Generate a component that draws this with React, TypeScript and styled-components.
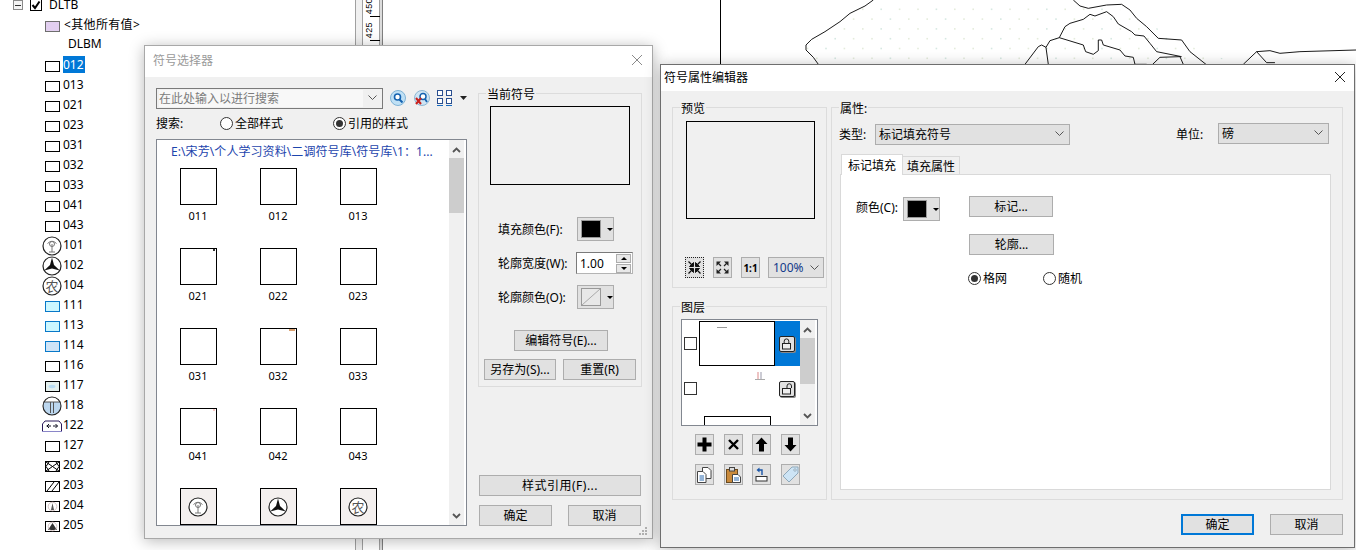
import React from "react";
import styled, { createGlobalStyle } from "styled-components";

const Global = createGlobalStyle`
  html, body { margin: 0; padding: 0; background: #fff; }
  body { font-family: "Noto Sans", "Noto Sans CJK SC", sans-serif; font-size: 12px; color: #000; }
  * { box-sizing: border-box; }
`;

const Desktop = styled.div`
  position: relative; width: 1356px; height: 550px; overflow: hidden; background: #fff;
`;

/* ---------- tree ---------- */
const Tree = styled.div`
  width: 144px; margin-top: -5px; display: flex; flex-direction: column;
`;
const TreeRow = styled.div`
  height: 20px; display: flex; align-items: center; padding-left: 42px; line-height: 16px; white-space: nowrap;
`;
const RootRow = styled(TreeRow)`
  padding-left: 13px;
`;
const Expander = styled.span`
  width: 10px; height: 10px; border: 1px solid #8a8a8a; background: #f4f4f4; display: flex; align-items: center; justify-content: center;
  &::after { content: ""; width: 6px; height: 1px; background: #333; }
`;
const TreeCheck = styled.span`
  width: 12px; height: 12px; border: 1px solid #000; margin-left: 7px; margin-right: 7px; display: flex;
`;
const IconSlot = styled.span`
  width: 20px; height: 20px; margin-top: 2px; display: flex; align-items: center; justify-content: center; flex: none;
`;
const RowText = styled.span<{ $selected?: boolean }>`
  margin: 0 0 2px 1px; padding: 0 1px 0 0; line-height: 17px; height: 17px;
  background: ${(p) => (p.$selected ? "#0078d7" : "transparent")};
  color: ${(p) => (p.$selected ? "#fff" : "#000")};
`;
const OtherText = styled.span`
  margin-left: 2px; letter-spacing: .35px;
`;
const FieldName = styled.span`
  margin: 0 0 2px 26px;
`;

/* ---------- ruler + map backdrop ---------- */
const Ruler = styled.div`
  position: absolute; left: 355px; top: 0; width: 28px; height: 550px; display: flex;
  border-left: 1px solid #a0a0a0; background: #f0f0f0;
`;
const RulerGap = styled.div`
  width: 6px;
`;
const RulerFace = styled.div`
  width: 18px; height: 100%; background: #fff; border-left: 1px solid #a0a0a0; position: relative;
  border-right: 1px solid #a0a0a0;
`;
const RulerEnd = styled.div`
  width: 3px; background: #dcdcdc; border-right: 1px solid #808080;
`;
const RulerTick = styled.span<{ $y: number }>`
  position: absolute; left: 7px; width: 10px; height: 1px; background: #000; top: ${(p) => p.$y}px;
`;
const RulerNum = styled.span<{ $y: number }>`
  position: absolute; left: 1px; top: ${(p) => p.$y}px; writing-mode: vertical-rl; transform: rotate(180deg);
  font-size: 9px; line-height: 10px; font-family: "Liberation Sans", sans-serif; letter-spacing: .4px;
`;
const MapSvg = styled.svg`
  position: absolute; left: 700px; top: 0; width: 656px; height: 70px;
`;

/* ---------- windows ---------- */
const Win = styled.section<{ $l: number; $t: number; $w: number; $h: number; $dark?: boolean }>`
  position: absolute; left: ${(p) => p.$l}px; top: ${(p) => p.$t}px; width: ${(p) => p.$w}px; height: ${(p) => p.$h}px;
  background: #f0f0f0; border: 1px solid ${(p) => (p.$dark ? "#6e6e6e" : "#a8a8a8")};
  box-shadow: 0 2px 14px rgba(0,0,0,.28); display: flex; flex-direction: column;
`;
const TitleBar = styled.header<{ $h: number; $dim?: boolean }>`
  height: ${(p) => p.$h}px; padding-bottom: 3px; background: #fff; flex: none; display: flex; align-items: center; justify-content: space-between;
  color: ${(p) => (p.$dim ? "#9a9a9a" : "#000")};
`;
const TitleText = styled.span<{ $left: number }>`
  margin-left: ${(p) => p.$left}px;
`;
const CloseIcon = styled.svg<{ $right: number }>`
  width: 12px; height: 12px; margin-right: ${(p) => p.$right}px;
`;

const Body1 = styled.div`
  flex: 1; display: flex; padding: 10px 11px 13px 11px; gap: 11px; position: relative;
`;
const LeftCol = styled.div`
  width: 311px; display: flex; flex-direction: column;
`;
const RightCol = styled.div`
  width: 164px; display: flex; flex-direction: column; padding-top: 6px;
`;
const SearchRow = styled.div`
  display: flex; align-items: center; height: 22px;
`;
const SearchCombo = styled.div`
  width: 227px; height: 21px; border: 1px solid #7a7a7a; background: #f0f0f0; display: flex; align-items: center; padding-left: 2px; flex: none;
`;
const SearchField = styled.span`
  width: 204px; min-height: 15px; background: #f8f8f8; color: #7c7c7c; line-height: 17px; white-space: nowrap;
`;
const ChevronBox = styled.span`
  flex: 1; display: flex; justify-content: center;
`;
const SearchIcon = styled.svg<{ $ml: number }>`
  margin-left: ${(p) => p.$ml}px; flex: none;
`;
const ScopeRow = styled.div`
  height: 20px; margin-top: 4px; display: flex; align-items: center;
`;
const ScopeLabel = styled.span`
  width: 64px;
`;
const RadioItem = styled.label<{ $w?: number }>`
  display: flex; align-items: center; gap: 2px; width: ${(p) => (p.$w ? `${p.$w}px` : "auto")}; white-space: nowrap;
`;
const RadioDot = styled.span<{ $on?: boolean }>`
  width: 13px; height: 13px; border-radius: 50%; border: 1px solid #333; background: #fff; display: flex; align-items: center; justify-content: center; flex: none;
  &::after { content: ""; width: 7px; height: 7px; border-radius: 50%; background: ${(p) => (p.$on ? "#333" : "transparent")}; }
`;
const SymbolList = styled.div`
  margin-top: 6px; height: 387px; border: 1px solid #828790; background: #fff; display: flex; overflow: hidden;
`;
const SymbolPane = styled.div`
  width: 292px; overflow: hidden; padding-left: 1px;
`;
const PathLine = styled.div`
  height: 28px; padding: 3px 0 0 13px; line-height: 17px; color: #1d45ad; white-space: nowrap; font-size: 12px; letter-spacing: .08px;
`;
const SymbolGrid = styled.div`
  display: grid; grid-template-columns: repeat(3, 80px); grid-auto-rows: 80px;
`;
const SymbolCell = styled.div`
  display: flex; flex-direction: column; align-items: center;
`;
const SymbolBox = styled.div<{ $tint?: boolean }>`
  width: 37px; height: 37px; border: 1px solid #000; background: ${(p) => (p.$tint ? "#f4f0ef" : "#fff")};
  position: relative; display: flex; align-items: center; justify-content: center; flex: none;
`;
const Speck = styled.span<{ $c: string; $w: number }>`
  position: absolute; top: 0; right: 1px; width: ${(p) => p.$w}px; height: 2px; background: ${(p) => p.$c};
`;
const SymbolName = styled.span`
  font-size: 11px; line-height: 14px; margin-top: 4px;
`;
const Scroll = styled.div<{ $w: number }>`
  width: ${(p) => p.$w}px; background: #f0f0f0; position: relative; flex: none; display: flex; flex-direction: column; align-items: center; justify-content: space-between;
  padding: 7px 0 6px;
`;
const Thumb = styled.div<{ $top: number; $h: number }>`
  position: absolute; left: 0; right: 0; top: ${(p) => p.$top}px; height: ${(p) => p.$h}px; background: #cdcdcd;
`;
const ListGutter = styled.div`
  flex: 1; background: #fff;
`;

const Group = styled.div<{ $h: number; $w?: number }>`
  position: relative; height: ${(p) => p.$h}px; ${(p) => (p.$w ? `width: ${p.$w}px;` : "")}
  border: 1px solid #dcdcdc; display: flex; flex-direction: column; flex: none;
`;
const Legend = styled.span`
  position: absolute; left: 7px; top: -8px; background: #f0f0f0; padding: 0 1px; line-height: 17px;
`;
const PreviewBox = styled.div<{ $w: number; $h: number; $ml: number; $mt: number }>`
  width: ${(p) => p.$w}px; height: ${(p) => p.$h}px; margin: ${(p) => p.$mt}px 0 0 ${(p) => p.$ml}px; border: 1px solid #000; flex: none;
`;
const PropRow = styled.div<{ $mt: number; $h: number }>`
  display: flex; align-items: center; height: ${(p) => p.$h}px; margin-top: ${(p) => p.$mt}px; padding-left: 19px;
`;
const PropLabel = styled.span`
  width: 79px; white-space: nowrap;
`;
const ColorBtn = styled.span`
  width: 37px; height: 24px; background: #e1e1e1; border: 1px solid #adadad; display: flex; align-items: center; padding-left: 3px; flex: none;
`;
const Swatch = styled.span`
  width: 20px; height: 18px; background: #000; border: 1px solid #9a9a9a; flex: none;
`;
const OutlineSwatch = styled.svg`
  width: 20px; height: 18px; flex: none;
`;
const Sep = styled.span`
  width: 1px; height: 18px; background: #a0a0a0; margin-left: 3px; box-shadow: 1px 0 0 #fff;
`;
const DropTri = styled.span`
  margin-left: 3px; width: 0; height: 0; border-left: 3px solid transparent; border-right: 3px solid transparent; border-top: 3px solid #000;
`;
const Spinner = styled.div`
  width: 57px; height: 22px; margin-left: -1px; background: #fff; border: 1px solid #7a7a7a; border-right-color: #b4b4b4; border-bottom-color: #b4b4b4; display: flex; align-items: center; justify-content: space-between; padding-left: 3px; padding-right: 1px;
`;
const SpinCol = styled.div`
  display: flex; flex-direction: column; gap: 1px;
`;
const SpinBtn = styled.span`
  width: 15px; height: 9px; background: #e8e8e8; border: 1px solid #adadad; display: flex; align-items: center; justify-content: center;
`;
const TriUp = styled.span`
  width: 0; height: 0; border-left: 3px solid transparent; border-right: 3px solid transparent; border-bottom: 3px solid #000;
`;
const TriDown = styled(TriUp)`
  border-bottom: 0; border-top: 3px solid #000;
`;
const Btn = styled.button<{ $w: number; $h?: number; $primary?: boolean; $wide?: boolean }>`
  width: ${(p) => p.$w}px; height: ${(p) => p.$h ?? 21}px; padding: 0; background: #e1e1e1; flex: none;
  border: ${(p) => (p.$primary ? "2px solid #0078d7" : "1px solid #adadad")};
  font: inherit; color: #000; white-space: nowrap; display: block; line-height: 17px; letter-spacing: ${(p) => (p.$wide ? ".5px" : "0")};
`;
const CenterRow = styled.div`
  display: flex; justify-content: center; margin-top: 21px; padding-left: 2px;
`;
const SplitRow = styled.div`
  display: flex; justify-content: space-between; margin: 8px 5px 0 5px;
`;
const BottomStack = styled.div`
  margin-top: auto; display: flex; flex-direction: column; gap: 9px; margin-left: 1px; margin-right: 1px;
`;
const PairRow = styled.div`
  display: flex; justify-content: space-between;
`;
const Grip = styled.svg`
  position: absolute; right: 4px; bottom: 3px;
`;

/* ---------- editor window ---------- */
const Body2 = styled.div`
  flex: 1; display: flex; flex-direction: column; padding: 16px 11px 12px 11px;
`;
const Columns = styled.div`
  display: flex; gap: 4px;
`;
const EditorLeft = styled.div`
  width: 156px; display: flex; flex-direction: column; gap: 18px;
`;
const ToolRow = styled.div<{ $mt: number; $pl: number; $gap: number }>`
  display: flex; align-items: center; margin-top: ${(p) => p.$mt}px; padding-left: ${(p) => p.$pl}px; gap: ${(p) => p.$gap}px;
`;
const ToolBtn = styled.span<{ $dotted?: boolean; $w?: number }>`
  width: ${(p) => p.$w ?? 19}px; height: 21px; background: #e1e1e1; border: 1px ${(p) => (p.$dotted ? "dotted #222" : "solid #adadad")};
  display: flex; align-items: center; justify-content: center; flex: none; font-weight: 700; font-size: 10px; line-height: 12px;
`;
const ZoomCombo = styled.span`
  width: 56px; height: 21px; margin-left: -1px; background: #e1e1e1; border: 1px solid #adadad; display: flex; align-items: center; justify-content: space-between; padding: 0 4px; color: #123a8a; flex: none;
`;
const LayerList = styled.div`
  width: 137px; height: 107px; margin: 12px 0 0 8px; border: 1px solid #828790; background: #fff; display: flex; overflow: hidden; flex: none;
`;
const LayerRows = styled.div`
  width: 118px; padding-top: 1px; display: flex; flex-direction: column; flex: none;
`;
const LayerRow = styled.div<{ $selected?: boolean }>`
  height: 45px; display: flex; align-items: center; flex: none;
  background: ${(p) => (p.$selected ? "linear-gradient(90deg, #fff 0 93px, #0078d7 93px)" : "#fff")};
`;
const LayerCheck = styled.span`
  width: 13px; height: 13px; border: 1px solid #333; background: #fff; margin-left: 2px; margin-right: 2px; flex: none;
`;
const LayerThumb = styled.span<{ $outlined?: boolean }>`
  width: 76px; height: 45px; border: 1px solid ${(p) => (p.$outlined ? "#000" : "transparent")}; position: relative; flex: none; background: #fff;
`;
const ThumbMark = styled.svg<{ $l: number; $t: number }>`
  position: absolute; left: ${(p) => p.$l}px; top: ${(p) => p.$t}px;
`;
const LockBtn = styled.span`
  width: 16px; height: 16px; margin-left: 4px; background: #e1e1e1; border: 1px solid #222; border-radius: 2px; box-shadow: 1px 1px 0 #888; display: flex; align-items: center; justify-content: center; flex: none;
`;
const LastLayer = styled.div`
  margin: 5px 0 0 22px; width: 67px; height: 30px; border: 1px solid #000; flex: none; background: #fff;
`;
const ActionRow = styled.div<{ $mt: number }>`
  display: flex; gap: 9.5px; margin-top: ${(p) => p.$mt}px; padding-left: 22px;
`;
const AttrRow = styled.div`
  display: flex; align-items: center; height: 22px; margin-top: 15px; padding-left: 7px;
`;
const AttrLabel = styled.span<{ $w: number; $ml?: number }>`
  width: ${(p) => p.$w}px; margin-left: ${(p) => p.$ml ?? 0}px; flex: none;
`;
const Combo = styled.div<{ $w: number; $up?: boolean }>`
  width: ${(p) => p.$w}px; height: 21px; background: #e1e1e1; border: 1px solid #adadad; display: flex; align-items: center; justify-content: space-between; padding: 0 5px 0 3px; flex: none;
  margin-top: ${(p) => (p.$up ? "-2px" : "0")};
`;
const Tabs = styled.div`
  display: flex; align-items: flex-end; height: 21px; margin: 9px 0 0 9px; position: relative; z-index: 1;
`;
const Tab = styled.span<{ $active?: boolean }>`
  height: ${(p) => (p.$active ? 21 : 19)}px; width: ${(p) => (p.$active ? 62 : 57)}px; flex: none; display: flex; align-items: center; justify-content: center;
  background: ${(p) => (p.$active ? "#fff" : "#f0f0f0")}; border: 1px solid #d9d9d9; border-bottom: ${(p) => (p.$active ? "0" : "1px solid #d9d9d9")};
  border-left: ${(p) => (p.$active ? "1px solid #d9d9d9" : "0")};
`;
const TabPanel = styled.div`
  margin: -1px 0 0 8px; width: 491px; height: 316px; background: #fff; border: 1px solid #d9d9d9; display: flex; padding: 21px 0 0 15px;
`;
const ColorLabel = styled.span`
  width: 47px; white-space: nowrap; line-height: 24px; flex: none;
`;
const ColorCell = styled.div`
  margin-top: 1px; margin-right: 29px; flex: none;
`;
const PanelButtons = styled.div`
  display: flex; flex-direction: column; gap: 17px;
`;
const RadioRow = styled.div`
  display: flex; align-items: center; margin-top: -4px; height: 20px; margin-left: -1px;
`;
const Footer = styled.div`
  display: flex; justify-content: flex-end; gap: 16px; margin-top: 14px; margin-right: 0;
`;

/* ---------- drawings ---------- */
const Chevron = ({ c = "#555" }: { c?: string }) => (
  <svg width="9" height="6" viewBox="0 0 9 6"><polyline points="0.5,0.5 4.5,4.5 8.5,0.5" fill="none" stroke={c} strokeWidth="1" /></svg>
);
const ChevUp = () => (
  <svg width="9" height="6" viewBox="0 0 9 6"><polyline points="1,5 4.5,1.5 8,5" fill="none" stroke="#555" strokeWidth="1.8" /></svg>
);
const ChevDown = () => (
  <svg width="9" height="6" viewBox="0 0 9 6"><polyline points="1,1 4.5,4.5 8,1" fill="none" stroke="#555" strokeWidth="1.8" /></svg>
);
const CloseX = ({ c, right }: { c: string; right: number }) => (
  <CloseIcon $right={right} viewBox="0 0 12 12"><path d="M1 1 L11 11 M11 1 L1 11" stroke={c} strokeWidth="1" fill="none" /></CloseIcon>
);

type Kind = "plain" | "cyan" | "blue" | "water" | "signal" | "star" | "nong" | "dam" | "ditch" | "hatch" | "slash" | "tower" | "mound";

const Glyph = ({ kind }: { kind: Kind }) => {
  if (kind === "signal" || kind === "star" || kind === "nong")
    return (
      <svg width="20" height="20" viewBox="0 0 20 20">
        <circle cx="10" cy="10" r="9" fill="#fff" stroke="#222" strokeWidth="1.2" />
        {kind === "signal" && (
          <g fill="none" stroke="#777" strokeWidth="1">
            <path d="M5.5 7.5 Q10 3 14.5 7.5" />
            <circle cx="10" cy="8" r="2.5" />
            <path d="M10 8 V16 M7 16 H13" />
          </g>
        )}
        {kind === "star" && <path d="M10 1.5 L12 9 L17.8 14.5 L10 12.4 L2.2 14.5 L8 9 Z" fill="#111" />}
        {kind === "nong" && (
          <text x="10" y="14.5" textAnchor="middle" fontSize="13" fill="#555" fontFamily="'Noto Sans CJK SC', sans-serif">农</text>
        )}
      </svg>
    );
  if (kind === "dam")
    return (
      <svg width="20" height="20" viewBox="0 0 20 20">
        <defs><clipPath id="damClip"><circle cx="10" cy="10" r="9" /></clipPath></defs>
        <circle cx="10" cy="10" r="9" fill="#fff" />
        <rect x="0" y="6" width="20" height="14" fill="#bcd7ef" clipPath="url(#damClip)" />
        <path d="M1.5 6 H18.5 M8.5 6 V17 M11.5 6 V17" stroke="#555" strokeWidth="1" fill="none" />
        <circle cx="10" cy="10" r="9" fill="none" stroke="#222" strokeWidth="1.1" />
      </svg>
    );
  if (kind === "ditch")
    return (
      <svg width="20" height="12" viewBox="0 0 20 12">
        <path d="M0.5 11.5 V4 L3 1 H17 L19.5 4 V11.5 Z" fill="#fff" stroke="#2a1a5a" strokeWidth="1" />
        <path d="M4.5 6 H9 M7 4 L5 6 L7 8 M11 6 H15.5 M13.5 4 L15.5 6 L13.5 8" stroke="#112" strokeWidth="1" fill="none" />
        <path d="M0 11.5 H20" stroke="#8a86c8" strokeWidth="1" />
      </svg>
    );
  const fill = kind === "cyan" ? "#ccf7ff" : kind === "blue" ? "#cfe4f7" : kind === "water" ? "#e4f0ee" : "#fff";
  const stroke = kind === "cyan" || kind === "blue" ? "#0878c8" : "#000";
  return (
    <svg width="15" height="11" viewBox="0 0 15 11">
      <rect x="0.5" y="0.5" width="14" height="10" fill={fill} stroke={stroke} strokeWidth="1" />
      {kind === "water" && <ellipse cx="7" cy="5.5" rx="3.5" ry="1.7" fill="#b9dcf3" />}
      {kind === "hatch" && <path d="M1 1 L14 10 M14 1 L1 10 M1 5.5 L4 1 M14 5.5 L11 1 M1 5.5 L4 10 M14 5.5 L11 10" stroke="#000" strokeWidth="1" />}
      {kind === "slash" && <path d="M2 10 L9 1 M7 10 L14 1" stroke="#000" strokeWidth="1" />}
      {kind === "tower" && <path d="M7.5 2 L9 9 H6 Z" fill="#555" />}
      {kind === "mound" && <path d="M3 9 L7.5 2 L12 9 Z" fill="#333" />}
      {(kind === "tower" || kind === "mound") && <circle cx="7.5" cy="5.5" r="4.3" fill="none" stroke="#c9b5b5" strokeWidth="0.8" />}
    </svg>
  );
};

const treeItems: { t: string; k: Kind }[] = [
  { t: "012", k: "plain" }, { t: "013", k: "plain" }, { t: "021", k: "plain" }, { t: "023", k: "plain" },
  { t: "031", k: "plain" }, { t: "032", k: "plain" }, { t: "033", k: "plain" }, { t: "041", k: "plain" },
  { t: "043", k: "plain" }, { t: "101", k: "signal" }, { t: "102", k: "star" }, { t: "104", k: "nong" },
  { t: "111", k: "cyan" }, { t: "113", k: "cyan" }, { t: "114", k: "blue" }, { t: "116", k: "plain" },
  { t: "117", k: "water" }, { t: "118", k: "dam" }, { t: "122", k: "ditch" }, { t: "127", k: "plain" },
  { t: "202", k: "hatch" }, { t: "203", k: "slash" }, { t: "204", k: "tower" }, { t: "205", k: "mound" },
];

const gridItems: { t: string; k?: Kind; speck?: [string, number] }[] = [
  { t: "011" }, { t: "012" }, { t: "013" },
  { t: "021", speck: ["#333", 2] }, { t: "022" }, { t: "023" },
  { t: "031" }, { t: "032", speck: ["#d9a070", 6] }, { t: "033" },
  { t: "041", speck: ["#f8c8c8", 2] }, { t: "042" }, { t: "043" },
  { t: "101", k: "signal" }, { t: "102", k: "star" }, { t: "104", k: "nong" },
];

const LockIcon = ({ open }: { open?: boolean }) => (
  <svg width="12" height="12" viewBox="0 0 12 12">
    <rect x="1.5" y="5.5" width="8" height="5.5" fill="#eee" stroke="#222" />
    {open ? <path d="M6 5 V3 A2.2 2.2 0 0 1 10.5 3 V5" fill="none" stroke="#222" /> : <path d="M3.2 5 V3.2 A2.3 2.3 0 0 1 7.8 3.2 V5" fill="none" stroke="#222" />}
  </svg>
);

const FitIn = () => (
  <svg width="13" height="13" viewBox="0 0 13 13" fill="#111" stroke="#111">
    <path d="M5.5 1.5 V5.5 H1.5 Z M7.5 1.5 V5.5 H11.5 Z M5.5 11.5 V7.5 H1.5 Z M7.5 11.5 V7.5 H11.5 Z" />
    <path d="M0.5 0.5 L4 4 M12.5 0.5 L9 4 M0.5 12.5 L4 9 M12.5 12.5 L9 9" strokeWidth="1.3" fill="none" />
  </svg>
);
const FitOut = () => (
  <svg width="13" height="13" viewBox="0 0 13 13" fill="#222">
    <path d="M0.5 0.5 H5 L0.5 5 Z M12.5 0.5 H8 L12.5 5 Z M0.5 12.5 H5 L0.5 8 Z M12.5 12.5 H8 L12.5 8 Z" />
    <path d="M2 2 L5 5 M11 2 L8 5 M2 11 L5 8 M11 11 L8 8" stroke="#222" strokeWidth="1.2" />
  </svg>
);

const PlusIcon = () => <svg width="15" height="15" viewBox="0 0 15 15"><path d="M5.5 0.5 H9.5 V5.5 H14.5 V9.5 H9.5 V14.5 H5.5 V9.5 H0.5 V5.5 H5.5 Z" fill="#000" /></svg>;
const CrossIcon = () => <svg width="11" height="11" viewBox="0 0 11 11"><path d="M1 1 L10 10 M10 1 L1 10" stroke="#000" strokeWidth="2.4" /></svg>;
const UpIcon = () => <svg width="13" height="15" viewBox="0 0 13 15"><path d="M6.5 0.5 L12.5 7 H9 V14.5 H4 V7 H0.5 Z" fill="#000" /></svg>;
const DownIcon = () => <svg width="13" height="15" viewBox="0 0 13 15"><path d="M6.5 14.5 L12.5 8 H9 V0.5 H4 V8 H0.5 Z" fill="#000" /></svg>;
const CopyIcon = () => (
  <svg width="15" height="16" viewBox="0 0 15 16" fill="#fff" stroke="#444">
    <path d="M5.5 0.5 H11 L14 3.5 V11.5 H5.5 Z" />
    <path d="M0.5 4.5 H6 L9 7.5 V15.5 H0.5 Z" />
    <path d="M2.5 9 H7 M2.5 11 H7 M2.5 13 H7" stroke="#2a6ab0" />
  </svg>
);
const PasteIcon = () => (
  <svg width="15" height="16" viewBox="0 0 15 16">
    <rect x="0.5" y="2.5" width="11" height="13" fill="#c98a3c" stroke="#6a4a20" />
    <rect x="3.5" y="0.5" width="5" height="3.5" fill="#ddd" stroke="#444" />
    <path d="M6.5 7.5 H12 L14.5 10 V15.5 H6.5 Z" fill="#fff" stroke="#444" />
    <path d="M8 11 H13 M8 13 H13" stroke="#2a6ab0" />
  </svg>
);
const RestoreIcon = () => (
  <svg width="13" height="15" viewBox="0 0 13 15">
    <rect x="1" y="9.5" width="11" height="4.5" fill="#fff" stroke="#333" />
    <path d="M7 8 V3 H3.5" fill="none" stroke="#1a56a8" strokeWidth="1.4" />
    <path d="M1.5 3 L4.5 0.5 V5.5 Z" fill="#1a56a8" />
  </svg>
);
const TagIcon = () => (
  <svg width="17" height="17" viewBox="0 0 17 17">
    <path d="M10 1 H16 V7 L7 16 L1 10 Z" fill="#cde4f5" stroke="#8fa9bb" />
    <circle cx="13" cy="4" r="1.2" fill="#fff" stroke="#8fa9bb" />
  </svg>
);

const dots: [number, number][] = [];
for (let r = 0; r < 7; r++) {
  for (let i = 0; i < 30; i++) {
    dots.push([800 + i * 18.4 + (r % 2 ? 9.2 : 0) - 30, 8.5 + r * 9.8]);
  }
}

const MapDrawing = () => (
  <MapSvg viewBox="700 0 656 70">
    <defs>
      <clipPath id="land">
        <path d="M873 0 L850 15 L805 48 L818 65 L1040 65 L1240 65 L1180 42 L1130 12 L1075 0 Z" />
      </clipPath>
    </defs>
    <g clipPath="url(#land)">
      {dots.map(([x, y], i) => (
        <rect key={i} x={x} y={y} width="1.6" height="1.6" fill={i % 3 ? "#e4ecdc" : "#d6e8e2"} />
      ))}
    </g>
    <path d="M720.5 0 V64" stroke="#000" fill="none" />
    <g transform="translate(790 0) scale(0.3333)" fill="none" stroke="#000" strokeWidth="2.7">
      <path d="M250 0 L225 18 L180 40 L150 65 L105 95 L65 118 L48 135 L48 150 L70 172 L85 193" />
      <path d="M850 0 L870 18 L895 25 L950 15 L995 13 L1020 30 L1040 55 L1070 80 L1105 115 L1175 120 L1200 155 L1248 193" />
      <path d="M705 193 L745 140 L755 135 L768 142 L775 193" />
      <path d="M768 142 L780 122 L808 113 L880 135 L887 155 L910 163 L925 152 L925 120 L935 120 L940 135 L990 150 L1005 168 L1030 172 L1035 193" />
      <path d="M808 113 L825 80 L840 70 L880 58 L900 43 L915 48 L950 35 L970 50 L985 72 L1025 95 L1035 105 L1062 108 L1080 130 L1100 155 L1175 170" />
      <path d="M1035 193 H1070 M1088 193 L1110 172 L1170 170 L1180 193" />
      <path d="M1360 193 L1400 155 L1440 152 L1470 160 L1530 155 L1700 150" />
      <path d="M1400 155 L1430 188 H1455" />
    </g>
  </MapSvg>
);

export default function App() {
  return (
    <Desktop>
      <Global />
      <Tree>
        <RootRow>
          <Expander />
          <TreeCheck>
            <svg width="10" height="10" viewBox="0 0 10 10"><path d="M1.5 5 L4 8 L8.5 1.5" fill="none" stroke="#000" strokeWidth="2" /></svg>
          </TreeCheck>
          <span>DLTB</span>
        </RootRow>
        <TreeRow>
          <IconSlot>
            <svg width="15" height="11" viewBox="0 0 15 11"><rect x="0.5" y="0.5" width="14" height="10" fill="#e2cff0" stroke="#6e6e6e" /></svg>
          </IconSlot>
          <OtherText>&lt;其他所有值&gt;</OtherText>
        </TreeRow>
        <TreeRow><FieldName>DLBM</FieldName></TreeRow>
        {treeItems.map((it, i) => (
          <TreeRow key={it.t}>
            <IconSlot><Glyph kind={it.k} /></IconSlot>
            <RowText $selected={i === 0}>{it.t}</RowText>
          </TreeRow>
        ))}
      </Tree>

      <Ruler>
        <RulerGap />
        <RulerFace>
          <RulerNum $y={-2}>450</RulerNum>
          <RulerTick $y={16} />
          <RulerNum $y={22}>425</RulerNum>
          <RulerTick $y={40} />
        </RulerFace>
        <RulerEnd />
      </Ruler>
      <MapDrawing />

      <Win $l={144} $t={45} $w={509} $h={494}>
        <TitleBar $h={31} $dim>
          <TitleText $left={8}>符号选择器</TitleText>
          <CloseX c="#8a8a8a" right={9} />
        </TitleBar>
        <Body1>
          <LeftCol>
            <SearchRow>
              <SearchCombo>
                <SearchField>在此处输入以进行搜索</SearchField>
                <ChevronBox><Chevron /></ChevronBox>
              </SearchCombo>
              <SearchIcon $ml={7} width="16" height="16" viewBox="0 0 16 16">
                <circle cx="8" cy="8" r="7.5" fill="#bfe0f5" stroke="#7fb2d6" />
                <circle cx="7.5" cy="7" r="3" fill="#fff" stroke="#1462b0" strokeWidth="1.6" />
                <path d="M9.5 9.5 L12.5 12.5" stroke="#1462b0" strokeWidth="2" />
              </SearchIcon>
              <SearchIcon $ml={8} width="16" height="16" viewBox="0 0 16 16">
                <circle cx="8" cy="8" r="7.5" fill="#cfe4f3" stroke="#8db7d4" />
                <circle cx="9" cy="6.5" r="3" fill="#fff" stroke="#1462b0" strokeWidth="1.5" />
                <path d="M11 9 L13 12" stroke="#1462b0" strokeWidth="1.8" />
                <path d="M2 8 L7 14 M7 8 L2 14" stroke="#c8201c" strokeWidth="2" />
              </SearchIcon>
              <SearchIcon $ml={7} width="16" height="16" viewBox="0 0 16 16">
                <g fill="#fff" stroke="#2a4f90">
                  <rect x="0.5" y="0.5" width="5" height="5" />
                  <rect x="9.5" y="0.5" width="5" height="5" />
                  <rect x="0.5" y="8.5" width="5" height="5" />
                  <rect x="9.5" y="8.5" width="5" height="5" />
                </g>
                <path d="M0 15.5 H6 M9 15.5 H15" stroke="#1a6cc0" />
              </SearchIcon>
              <SearchIcon $ml={7} width="7" height="4" viewBox="0 0 7 4"><path d="M0 0 H7 L3.5 4 Z" fill="#222" /></SearchIcon>
            </SearchRow>
            <ScopeRow>
              <ScopeLabel>搜索:</ScopeLabel>
              <RadioItem $w={113}><RadioDot />全部样式</RadioItem>
              <RadioItem><RadioDot $on />引用的样式</RadioItem>
            </ScopeRow>
            <SymbolList>
              <SymbolPane>
                <PathLine>E:\宋芳\个人学习资料\二调符号库\符号库\1：1...</PathLine>
                <SymbolGrid>
                  {gridItems.map((g) => (
                    <SymbolCell key={g.t}>
                      <SymbolBox $tint={!!g.k}>
                        {g.speck && <Speck $c={g.speck[0]} $w={g.speck[1]} />}
                        {g.k && <Glyph kind={g.k} />}
                      </SymbolBox>
                      <SymbolName>{g.t}</SymbolName>
                    </SymbolCell>
                  ))}
                </SymbolGrid>
              </SymbolPane>
              <Scroll $w={15}>
                <ChevUp />
                <Thumb $top={18} $h={55} />
                <ChevDown />
              </Scroll>
              <ListGutter />
            </SymbolList>
          </LeftCol>
          <RightCol>
            <Group $h={294}>
              <Legend>当前符号</Legend>
              <PreviewBox $w={140} $h={79} $ml={11} $mt={12} />
              <PropRow $mt={32} $h={24}>
                <PropLabel>填充颜色(F):</PropLabel>
                <ColorBtn><Swatch /><Sep /><DropTri /></ColorBtn>
              </PropRow>
              <PropRow $mt={11} $h={22}>
                <PropLabel>轮廓宽度(W):</PropLabel>
                <Spinner>
                  1.00
                  <SpinCol>
                    <SpinBtn><TriUp /></SpinBtn>
                    <SpinBtn><TriDown /></SpinBtn>
                  </SpinCol>
                </Spinner>
              </PropRow>
              <PropRow $mt={11} $h={24}>
                <PropLabel>轮廓颜色(O):</PropLabel>
                <ColorBtn>
                  <OutlineSwatch viewBox="0 0 20 18">
                    <rect x="0.5" y="0.5" width="19" height="17" fill="#e8e8e8" stroke="#999" />
                    <path d="M1 17 L19 1" stroke="#aaa" />
                  </OutlineSwatch>
                  <Sep /><DropTri />
                </ColorBtn>
              </PropRow>
              <CenterRow><Btn $w={94}>编辑符号(E)...</Btn></CenterRow>
              <SplitRow>
                <Btn $w={72}>另存为(S)...</Btn>
                <Btn $w={73}>重置(R)</Btn>
              </SplitRow>
            </Group>
            <BottomStack>
              <Btn $w={162} $wide>样式引用(F)...</Btn>
              <PairRow>
                <Btn $w={73}>确定</Btn>
                <Btn $w={73}>取消</Btn>
              </PairRow>
            </BottomStack>
          </RightCol>
          <Grip width="9" height="9" viewBox="0 0 9 9" fill="#b0b0b0">
            <rect x="6" y="0" width="2" height="2" />
            <rect x="3" y="3" width="2" height="2" /><rect x="6" y="3" width="2" height="2" />
            <rect x="0" y="6" width="2" height="2" /><rect x="3" y="6" width="2" height="2" /><rect x="6" y="6" width="2" height="2" />
          </Grip>
        </Body1>
      </Win>

      <Win $l={660} $t={64} $w={695} $h={484} $dark>
        <TitleBar $h={26}>
          <TitleText $left={3}>符号属性编辑器</TitleText>
          <CloseX c="#222" right={8} />
        </TitleBar>
        <Body2>
          <Columns>
            <EditorLeft>
              <Group $h={181}>
                <Legend>预览</Legend>
                <PreviewBox $w={129} $h={98} $ml={13} $mt={13} />
                <ToolRow $mt={38} $pl={12} $gap={9}>
                  <ToolBtn $dotted><FitIn /></ToolBtn>
                  <ToolBtn><FitOut /></ToolBtn>
                  <ToolBtn>1:1</ToolBtn>
                  <ZoomCombo>100%<Chevron /></ZoomCombo>
                </ToolRow>
              </Group>
              <Group $h={194}>
                <Legend>图层</Legend>
                <LayerList>
                  <LayerRows>
                    <LayerRow $selected>
                      <LayerCheck />
                      <LayerThumb $outlined>
                        <ThumbMark $l={17} $t={5} width="10" height="2" viewBox="0 0 10 2"><rect width="10" height="1" fill="#999" /></ThumbMark>
                      </LayerThumb>
                      <LockBtn><LockIcon /></LockBtn>
                    </LayerRow>
                    <LayerRow>
                      <LayerCheck />
                      <LayerThumb>
                        <ThumbMark $l={55} $t={5} width="10" height="9" viewBox="0 0 10 9"><path d="M3 0 V7" stroke="#d88" /><path d="M6 0 V7" stroke="#99a" /><rect y="7" width="10" height="1" fill="#aaa" /></ThumbMark>
                      </LayerThumb>
                      <LockBtn><LockIcon open /></LockBtn>
                    </LayerRow>
                    <LastLayer />
                  </LayerRows>
                  <Scroll $w={15}>
                    <ChevUp />
                    <Thumb $top={18} $h={46} />
                    <ChevDown />
                  </Scroll>
                </LayerList>
                <ActionRow $mt={8}>
                  <ToolBtn><PlusIcon /></ToolBtn>
                  <ToolBtn><CrossIcon /></ToolBtn>
                  <ToolBtn><UpIcon /></ToolBtn>
                  <ToolBtn><DownIcon /></ToolBtn>
                </ActionRow>
                <ActionRow $mt={9}>
                  <ToolBtn><CopyIcon /></ToolBtn>
                  <ToolBtn><PasteIcon /></ToolBtn>
                  <ToolBtn><RestoreIcon /></ToolBtn>
                  <ToolBtn><TagIcon /></ToolBtn>
                </ActionRow>
              </Group>
            </EditorLeft>
            <Group $h={393} $w={512}>
              <Legend>属性:</Legend>
              <AttrRow>
                <AttrLabel $w={36}>类型:</AttrLabel>
                <Combo $w={195}>标记填充符号<Chevron /></Combo>
                <AttrLabel $w={42} $ml={106}>单位:</AttrLabel>
                <Combo $w={111} $up>磅<Chevron /></Combo>
              </AttrRow>
              <Tabs>
                <Tab $active>标记填充</Tab>
                <Tab>填充属性</Tab>
              </Tabs>
              <TabPanel>
                <ColorLabel>颜色(C):</ColorLabel>
                <ColorCell><ColorBtn><Swatch /><Sep /><DropTri /></ColorBtn></ColorCell>
                <PanelButtons>
                  <Btn $w={84}>标记...</Btn>
                  <Btn $w={85}>轮廓...</Btn>
                  <RadioRow>
                    <RadioItem $w={75}><RadioDot $on />格网</RadioItem>
                    <RadioItem><RadioDot />随机</RadioItem>
                  </RadioRow>
                </PanelButtons>
              </TabPanel>
            </Group>
          </Columns>
          <Footer>
            <Btn $w={73} $primary>确定</Btn>
            <Btn $w={73}>取消</Btn>
          </Footer>
        </Body2>
      </Win>
    </Desktop>
  );
}
